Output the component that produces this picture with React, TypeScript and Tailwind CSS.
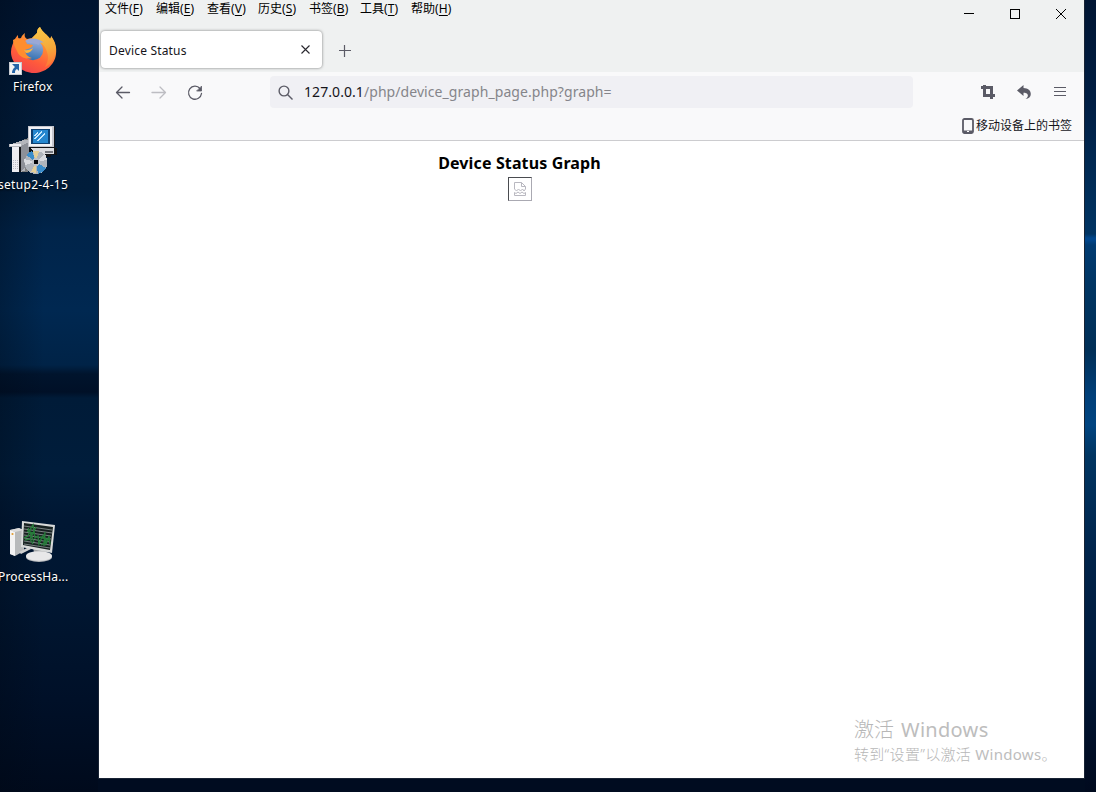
import React from 'react';

const menus = [
  ['文件', 'F'],
  ['编辑', 'E'],
  ['查看', 'V'],
  ['历史', 'S'],
  ['书签', 'B'],
  ['工具', 'T'],
  ['帮助', 'H'],
];

function FirefoxIcon() {
  return (
    <svg width="50" height="50" viewBox="0 0 50 50">
      <defs>
        <linearGradient id="fire" x1="0.8" y1="0" x2="0.3" y2="1">
          <stop offset="0" stopColor="#ffb43e" />
          <stop offset="0.4" stopColor="#ff8a34" />
          <stop offset="0.72" stopColor="#ff5a3c" />
          <stop offset="1" stopColor="#f0444c" />
        </linearGradient>
        <linearGradient id="globe" x1="0.5" y1="0" x2="0.3" y2="1">
          <stop offset="0" stopColor="#9db0dc" />
          <stop offset="1" stopColor="#2f6fb0" />
        </linearGradient>
        <linearGradient id="flame" x1="0.3" y1="0" x2="0.5" y2="1">
          <stop offset="0" stopColor="#f9c747" />
          <stop offset="0.6" stopColor="#f5a83a" />
          <stop offset="1" stopColor="#ff7a36" />
        </linearGradient>
      </defs>
      <path d="M6 12c1-2 2-3 3-4 0 2 0 3 1 4l2-1c1-3 3-4 4-5-1 3 0 5 2 6l5-1 5-5c0-3 1-5 3-6 2 5 8 8 10 12 1-1 1-2 1-3 4 5 6 11 5 18-1 11-11 19-22 19S2 37 2 25c0-5 2-9 4-13z" fill="url(#fire)" />
      <path d="M23 11l5-5c0-3 1-5 3-6 2 5 8 8 10 12 1-1 1-2 1-3 4 6 6 12 4 19-2 7-6 10-10 12 3-5 4-10 2-15-2-8-8-10-15-14z" fill="url(#flame)" />
      <circle cx="24" cy="23" r="10.2" fill="url(#globe)" />
      <path d="M4 13c7-4 12 0 14 4l6 1c-1 3-5 4-8 5 0 4 3 7 7 8-6 2-13-1-15-7-2-4-4-7-4-11z" fill="#ff8d2e" />
      <path d="M16 14c6-5 15-2 19 2-4-1-5 0-5 2-5-3-9 0-14-4z" fill="#9aa8d6" />
      <path d="M15 23c4 1 7-1 9-2-1 3-4 5-7 5z" fill="#ffb43b" />
    </svg>
  );
}

function SetupIcon() {
  return (
    <svg width="50" height="50" viewBox="0 0 50 50" shapeRendering="crispEdges">
      <path d="M12 15l7-3h8v29l-9 5h-6z" fill="#808080" />
      <path d="M0 18h3l11-4h10v3l-8 4v24l-7 1H3V21H0z" fill="#b4b6bc" />
      <path d="M1 18h11v2H1zM3 21h7v25H3z" fill="#eeeef2" />
      <path d="M10 21h2v25h-2z" fill="#17181b" />
      <path d="M12 20l8-4v23l-8 6z" fill="#8d9098" />
      <path d="M4 34h6M4 36h6M4 38h6M4 40h6M4 42h6" stroke="#bcbdc5" strokeDasharray="1 1" />
      <path d="M20 1h26v21h2v7h-6v2H20z" fill="#111317" />
      <path d="M19 0h26v21H19z" fill="#c6c7ce" />
      <path d="M20 1h23v19H20z" fill="#f2f2f5" />
      <path d="M22 3h19v15H22z" fill="#0d4072" />
      <path d="M24 4h15v13H24z" fill="#2587cf" />
      <path d="M25 12h1v-1h1v-1h1V9h1V8h1V7h1V6h1V5M25 9h1V8h1V7h1V6M28 14h1v-1h1v-1h1v-1h1v-1h1V9h1V8h1V7h1" stroke="#c4e7ff" fill="none" />
      <path d="M22 22h23v6H27z" fill="#dbdce0" />
      <path d="M36 25h8v2h-8z" fill="#74777f" />
      <circle cx="27" cy="36.500" r="11.5" fill="#b0b5bc" />
      <path d="M27 36L17 29l4-3 2-1zM27 36l10 6-4 4-4 2z" fill="#3b8dca" />
      <path d="M27 36l-3-11 6 0zM27 36l0 11-5-1z" fill="#e5cf98" />
      <path d="M27 36l9-9 2 7zM27 36l-11 3-1-6z" fill="#d9dbe0" />
      <circle cx="27" cy="36" r="4" fill="#bec1c6" />
      <circle cx="27" cy="36" r="2.5" fill="#05080c" />
    </svg>
  );
}

function ProcessIcon() {
  return (
    <svg width="48" height="46" viewBox="0 0 48 46">
      <path d="M0 10l9-2 5 4v19l-9 5-5-2z" fill="#b8babb" />
      <path d="M0 10l5 2v24l-5-2z" fill="#f3f3f3" />
      <path d="M0 10l9-2 5 2-9 2z" fill="#ddd" />
      <circle cx="2.5" cy="14" r="1.1" fill="#e09b30" />
      <path d="M9 32l10-5 2 2-10 5z" fill="#cfcfcf" />
      <path d="M23 28h14l-2 8H25z" fill="#a0a3a5" />
      <ellipse cx="29" cy="37" rx="13" ry="5" fill="#b6b9bc" />
      <ellipse cx="29" cy="36" rx="13" ry="4.8" fill="#e8e8e9" />
      <path d="M12 1l33 4-3 28-31-6z" fill="#d8dada" />
      <path d="M14 3l29 4-3 23-27-5z" fill="#172121" />
      <path d="M14 6l28 4M14 9l28 4M14 12l27 4M14 15l27 4M14 18l26 4M14 21l26 4M14 24l26 4" stroke="#858c8d" strokeWidth="0.9" />
      <path d="M14 18l4-2 3-8 2-3 2 13 3-2 1 8 3-7 2-2 2 9 3-8 1 8M15 20l5-1 3 5M17 11l8 3M18 8l6 14M26 7l-6 12M30 17l9 3M31 25l8-6M35 12l-1 14" stroke="#267c3a" strokeWidth="1.4" fill="none" />
    </svg>
  );
}

function Shortcut() {
  return (
    <svg className="absolute left-[9px] top-[62px]" width="13" height="13" viewBox="0 0 13 13">
      <path d="M0 0h13v13H0z" fill="#c8ccd2" />
      <path d="M1 1h11v11H1z" fill="#f4f4f4" />
      <path d="M3 2h7v7L8 7c-2 1-2 2-2 4H3c0-3 1-4 3-6z" fill="#2565a8" />
    </svg>
  );
}

function Label({ children, className }: { children: React.ReactNode; className: string }) {
  return <div className={`h-[18px] whitespace-nowrap text-[12px] leading-[18px] text-white [text-shadow:0_1px_2px_#000] ${className}`}>{children}</div>;
}

function Desktop() {
  return (
    <aside className="relative flex h-[792px] w-[98px] shrink-0 flex-col bg-[linear-gradient(90deg,rgba(0,8,20,0.3)_0%,transparent_45%),linear-gradient(180deg,#00142f_0px,#001a38_100px,#001d3b_190px,#00244a_230px,#002851_310px,#002347_365px,#00142d_374px,#001027_392px,#001b38_398px,#001d3b_470px,#001733_520px,#001631_600px,#001028_700px,#000a1c_792px)]">
      <div className="ml-[9px] mt-[27px] h-[50px]"><FirefoxIcon /></div>
      <Shortcut />
      <Label className="ml-[13px] mt-px tracking-[0.18px]">Firefox</Label>
      <div className="ml-[9px] mt-[30px] h-[50px]"><SetupIcon /></div>
      <Label className="-ml-[2px] tracking-[0.3px]">setup2-4-15</Label>
      <div className="ml-[10px] mt-[326px] h-[46px]"><ProcessIcon /></div>
      <Label className="-ml-[2px] mt-[2px] tracking-[0.15px]">ProcessHa...</Label>
    </aside>
  );
}

function MenuBar() {
  return (
    <header className="flex h-[31px] justify-between">
      <nav className="flex pl-[6px] pt-px text-[12px] leading-4 text-black">
        {menus.map(([name, key]) => (
          <div key={key} className="w-[51px] whitespace-nowrap">
            {name}<span className="tracking-[0.15px]">(<span className="underline underline-offset-2">{key}</span>)</span>
          </div>
        ))}
      </nav>
      <div className="flex h-[28px] pr-[18px]">
        <svg width="102" height="28" viewBox="0 0 102 28" fill="none" stroke="#000" shapeRendering="crispEdges">
          <path d="M0 13.5h10M46.500 9.500h9v9h-9z" />
          <path d="M92 9l10 10M102 9L92 19" shapeRendering="auto" />
        </svg>
      </div>
    </header>
  );
}

function TabStrip() {
  return (
    <div className="flex h-[41px] pl-[2px]">
      <div className="flex h-[37px] w-[221px] items-center justify-between rounded-[4px] bg-white pl-2 pr-3 shadow-[0_0_3px_rgba(0,0,0,0.5)]">
        <span className="pt-[2px] text-[12px] tracking-[0.18px] text-[#15141a]">Device Status</span>
        <svg width="9" height="9" viewBox="0 0 9 9" stroke="#29282f" strokeWidth="1.1"><path d="M.5.5l8 8M8.500.5l-8 8" /></svg>
      </div>
      <svg className="ml-[17px] mt-[14px]" width="12" height="12" viewBox="0 0 12 12" stroke="#5b5b66" strokeWidth="1.2"><path d="M0 5.500h12M5.500 0v12" /></svg>
    </div>
  );
}

function Toolbar() {
  return (
    <div className="flex h-[40px] items-center bg-[#f9f9fa]">
      <svg className="shrink-0" width="171" height="40" viewBox="0 0 171 40" fill="none" stroke="#5b5b66" strokeWidth="1.3" strokeLinecap="round" strokeLinejoin="round">
        <path d="M30.500 20.500H17.500M23 15l-5.500 5.500L23 26" />
        <path d="M53 20.500h13.500M61 15l5.500 5.500L61 26" stroke="#bdbdc2" />
        <path d="M101 16.500a6.500 6.500 0 1 0 1.500 5" />
        <path d="M102.500 14.500v4.500h-4.500z" fill="#5b5b66" strokeWidth="0.8" />
      </svg>
      <div className="flex h-8 w-[643px] shrink-0 items-center rounded-[4px] bg-[#f0f0f4]">
        <svg className="ml-2 mr-[11px] shrink-0" width="15" height="15" viewBox="0 0 15 15" fill="none" stroke="#5b5b66" strokeWidth="1.4"><circle cx="6" cy="6" r="4.9" /><path d="M9.500 9.500l5 5" /></svg>
        <span className="whitespace-nowrap pb-[2px] text-[14px] tracking-[0.07px] text-[#85858a]"><span className="text-[#15141a]">127.0.0.1</span>/php/device_graph_page.php?graph=</span>
      </div>
      <svg className="ml-[68px] shrink-0" width="87" height="16" viewBox="0 0 87 16" fill="none" stroke="#5b5b66">
        <path d="M3.500 1v10.500H14M0 3.500h10.500V15" strokeWidth="3" />
        <path d="M42.500 1v3c4.500.2 7.300 2.500 7.300 6 0 2.800-2 4.800-5.300 5 2-1.200 3-3 2-4.800-.6-1-1.900-1.500-4-1.500V12L36 6.500z" fill="#5b5b66" stroke="none" />
        <path d="M73 3.500h12M73 7.500h12M73 11.500h12" strokeWidth="1.1" />
      </svg>
    </div>
  );
}

function BookmarkBar() {
  return (
    <div className="flex h-[29px] items-center justify-end border-b border-[#cccccf] bg-[#f9f9fa] pb-px pr-[12px]">
      <svg className="mr-[2px]" width="12" height="16" viewBox="0 0 12 16">
        <rect x="1" y="1" width="10" height="14" rx="1.5" fill="none" stroke="#5b5b66" strokeWidth="1.8" />
        <path d="M1 12.500h10v2H1z" fill="#5b5b66" /><path d="M5 13h2v1H5z" fill="#fff" />
      </svg>
      <span className="text-[12px] leading-4 text-[#15141a]">移动设备上的书签</span>
    </div>
  );
}

function Page() {
  return (
    <main className="flex min-h-0 flex-1 flex-col bg-white">
      <div className="ml-[339px] flex w-[163px] flex-col items-center pt-[11px]">
        <h1 className="whitespace-nowrap text-[16px] font-bold leading-[22px] tracking-[0.13px] text-black">Device Status Graph</h1>
        <div className="mt-[3px] flex h-6 w-6 items-center justify-center border border-b-[#aaa9b2] border-l-[#4a4c50] border-r-[#aaa9b2] border-t-[#4a4c50]">
          <svg width="12" height="14" viewBox="0 0 12 14" fill="none" stroke="#b9b8c0">
            <path d="M.5 7V.500h7l4 4V7M7.500.500v4h4M.5 7l2 2 2-2 2 2 2-2 1.500 2 1.500-2M.5 10.500v3h11v-3l-1.500 1-2-1.500-2 1.500-2-1.500-2 1.500z" />
          </svg>
        </div>
      </div>
      <div className="mb-[13px] ml-[755px] mt-auto whitespace-nowrap text-[#b7b7b7]">
        <div className="text-[20px] font-light leading-[26px]">激活<span className="ml-[7px] font-normal tracking-[0.3px] text-[#bdbdbd]">Windows</span></div>
        <div className="text-[15px] font-light leading-[22px] tracking-[0.3px]">转到“设置”以激活 <span className="font-normal text-[#bdbdbd]">Windows</span>。</div>
      </div>
    </main>
  );
}

export default function App() {
  return (
    <div className="flex h-[792px] w-[1096px] overflow-hidden bg-[#000c20] font-['Noto_Sans','Noto_Sans_CJK_SC',sans-serif]">
      <Desktop />
      <section className="flex h-[779px] w-[987px] shrink-0 flex-col border-x border-b border-[#182334] bg-[#eff1f1]">
        <MenuBar />
        <TabStrip />
        <Toolbar />
        <BookmarkBar />
        <Page />
      </section>
      <div className="h-[792px] w-[11px] bg-[linear-gradient(180deg,#001533_0px,#001e43_100px,#002f5b_200px,#003463_234px,#00468c_238px,#00468c_240px,#003b72_245px,#003563_285px,#002f57_350px,#003f79_395px,#004481_425px,#003562_455px,#00234a_560px,#001b3d_650px,#000d25_755px,#000a1e_792px)]" />
    </div>
  );
}
